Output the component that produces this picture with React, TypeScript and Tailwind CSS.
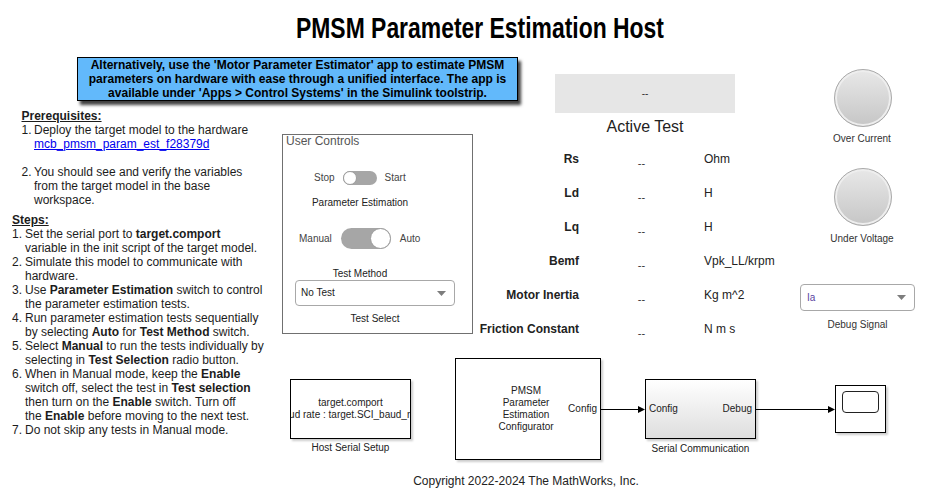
import React from "react";

function Caret() {
  return (
    <svg width="9" height="5" viewBox="0 0 9 5" className="block">
      <polygon points="0,0 9,0 4.5,5" fill="#7d7d7d" />
    </svg>
  );
}

function Arrow({ width }: { width: number }) {
  return (
    <svg width={width} height="9" viewBox={`0 0 ${width} 9`} className="block shrink-0">
      <line x1="0" y1="4.5" x2={width - 6} y2="4.5" stroke="#000" strokeWidth="1" />
      <polygon points={`${width - 7},1 ${width},4.5 ${width - 7},8`} fill="#000" />
    </svg>
  );
}

function Lamp() {
  return (
    <div className="w-[58px] h-[58px] rounded-full border border-[#a9a9a9] bg-[linear-gradient(#e8e8e8,#c6c6c6)] shadow-[inset_0_0_0_2px_#eeeeee]" />
  );
}

const params = [
  { label: "Rs", unit: "Ohm" },
  { label: "Ld", unit: "H" },
  { label: "Lq", unit: "H" },
  { label: "Bemf", unit: "Vpk_LL/krpm" },
  { label: "Motor Inertia", unit: "Kg m^2" },
  { label: "Friction Constant", unit: "N m s" },
];

export default function App() {
  return (
    <div className="relative w-[926px] h-[501px] overflow-hidden bg-white text-[#1c1c1c] font-['Liberation_Sans',Arial,sans-serif]">
      {/* Title */}
      <h1 className="absolute left-[296px] top-[14px] origin-left scale-x-[0.79] whitespace-nowrap text-[29px] leading-[29px] font-bold text-black">
        PMSM Parameter Estimation Host
      </h1>

      {/* Notice annotation */}
      <div className="absolute left-[77px] top-[57px] w-[441px] h-[44px] border border-black bg-[#62b9fb] text-center text-[12px] leading-[14px] font-bold text-black shadow-[3px_4px_3px_rgba(0,0,0,0.75)]">
        Alternatively, use the 'Motor Parameter Estimator' app to estimate PMSM
        <br />
        parameters on hardware with ease through a unified interface. The app is
        <br />
        available under 'Apps &gt; Control Systems' in the Simulink toolstrip.
      </div>

      {/* Instructions */}
      <div className="absolute left-[12px] top-[109px] w-[275px] text-[12px] leading-[14px] whitespace-nowrap">
        <div className="pl-[9.5px]">
          <p className="font-bold underline">Prerequisites:</p>
          <div className="flex">
            <span className="w-[12.5px] shrink-0">1.</span>
            <span>
              Deploy the target model to the hardware
              <br />
              <a className="text-[#0000ee] underline">mcb_pmsm_param_est_f28379d</a>
            </span>
          </div>
          <div className="h-[14px]" />
          <div className="flex">
            <span className="w-[12.5px] shrink-0">2.</span>
            <span>
              You should see and verify the variables
              <br />
              from the target model in the base
              <br />
              workspace.
            </span>
          </div>
        </div>
        <div className="mt-[6px]">
          <p className="font-bold underline">Steps:</p>
          <div className="flex">
            <span className="w-[13px] shrink-0">1.</span>
            <span>
              Set the serial port to <b>target.comport</b>
              <br />
              variable in the init script of the target model.
            </span>
          </div>
          <div className="flex">
            <span className="w-[13px] shrink-0">2.</span>
            <span>
              Simulate this model to communicate with
              <br />
              hardware.
            </span>
          </div>
          <div className="flex">
            <span className="w-[13px] shrink-0">3.</span>
            <span>
              Use <b>Parameter Estimation</b> switch to control
              <br />
              the parameter estimation tests.
            </span>
          </div>
          <div className="flex">
            <span className="w-[13px] shrink-0">4.</span>
            <span>
              Run parameter estimation tests sequentially
              <br />
              by selecting <b>Auto</b> for <b>Test Method</b> switch.
            </span>
          </div>
          <div className="flex">
            <span className="w-[13px] shrink-0">5.</span>
            <span>
              Select <b>Manual</b> to run the tests individually by
              <br />
              selecting in <b>Test Selection</b> radio button.
            </span>
          </div>
          <div className="flex">
            <span className="w-[13px] shrink-0">6.</span>
            <span>
              When in Manual mode, keep the <b>Enable</b>
              <br />
              switch off, select the test in <b>Test selection</b>
              <br />
              then turn on the <b>Enable</b> switch. Turn off
              <br />
              the <b>Enable</b> before moving to the next test.
            </span>
          </div>
          <div className="flex">
            <span className="w-[13px] shrink-0">7.</span>
            <span>Do not skip any tests in Manual mode.</span>
          </div>
        </div>
      </div>

      {/* User Controls panel */}
      <div className="absolute left-[282px] top-[134px] flex flex-col w-[191px] h-[200px] border border-[#707070] text-[10px] leading-[12px] text-[#222]">
        <div className="ml-[3px] -mt-[1px] text-[12px] leading-[14px] text-[#555]">User Controls</div>

        <div className="mt-[23px] ml-[31px] flex items-center gap-[8px] text-[#444]">
          <span>Stop</span>
          <div className="flex w-[34px] h-[14px] rounded-full bg-[#a6a6a6]">
            <div className="w-[14px] h-[14px] rounded-full border border-[#9c9c9c] bg-white" />
          </div>
          <span>Start</span>
        </div>
        <div className="mt-[12px] ml-[17px] w-[120px] text-center">Parameter Estimation</div>

        <div className="mt-[19px] ml-[16px] flex items-center gap-[9px] text-[#444]">
          <span>Manual</span>
          <div className="flex justify-end w-[50px] h-[21px] rounded-full bg-[#a6a6a6]">
            <div className="w-[21px] h-[21px] rounded-full border border-[#9c9c9c] bg-white" />
          </div>
          <span>Auto</span>
        </div>
        <div className="mt-[19px] ml-[17px] w-[120px] text-center">Test Method</div>

        <div className="ml-[12px] flex items-center justify-between w-[160px] h-[26px] rounded-[4px] border border-[#a8a8a8] bg-white pl-[5px] pr-[8px]">
          <span>No Test</span>
          <Caret />
        </div>
        <div className="mt-[7px] ml-[32px] w-[120px] text-center">Test Select</div>
      </div>

      {/* Active test display + parameter table */}
      <div className="absolute left-[555px] top-[74px] flex flex-col items-center w-[180px]">
        <div className="flex items-center justify-center w-full h-[39px] bg-[#e6e6e6] text-[10px] text-[#333]">--</div>
        <div className="mt-[4px] text-[16px] leading-[20px] text-[#222]">Active Test</div>
      </div>

      <div className="absolute left-[440px] top-[142px] grid grid-cols-[139px_125px_auto] auto-rows-[34px] items-center text-[12px] leading-[16px] text-[#222]">
        {params.map((p) => (
          <React.Fragment key={p.label}>
            <div className="text-right font-bold">{p.label}</div>
            <div className="pt-[7px] text-center text-[11px] text-[#333]">--</div>
            <div>{p.unit}</div>
          </React.Fragment>
        ))}
      </div>

      {/* Lamps and debug signal */}
      <div className="absolute left-[800px] top-[69px] flex flex-col items-center w-[115px] text-[10px] leading-[12px] text-[#333]">
        <div className="ml-[11px]">
          <Lamp />
        </div>
        <div className="mt-[6px] ml-[9px]">Over Current</div>
        <div className="mt-[23px] ml-[11px]">
          <Lamp />
        </div>
        <div className="mt-[7px] ml-[9px]">Under Voltage</div>
        <div className="mt-[39px] flex items-center justify-between w-full h-[27px] rounded-[4px] border border-[#a8a8a8] bg-white pl-[6px] pr-[8px]">
          <span className="text-[#5a3fa0]">Ia</span>
          <Caret />
        </div>
        <div className="mt-[8px]">Debug Signal</div>
      </div>

      {/* Block diagram */}
      <div className="absolute left-[290px] top-[358px] flex items-center h-[102px] text-[10px] leading-[12px] text-[#222]">
        <div className="relative">
          <div className="flex flex-col items-center justify-center w-[121px] h-[60px] overflow-hidden border border-black bg-white whitespace-nowrap shadow-[2px_2px_2px_rgba(0,0,0,0.2)]">
            <span>target.comport</span>
            <span>Baud rate : target.SCI_baud_rate</span>
          </div>
          <div className="absolute left-0 right-0 top-[63px] text-center">Host Serial Setup</div>
        </div>

        <div className="ml-[44px] flex items-center w-[146px] h-[102px] border border-black bg-white shadow-[2px_2px_2px_rgba(0,0,0,0.2)]">
          <div className="flex-1 pl-[34px] text-center">
            PMSM
            <br />
            Parameter
            <br />
            Estimation
            <br />
            Configurator
          </div>
          <div className="pr-[3px] pl-[6px]">Config</div>
        </div>

        <Arrow width={44} />

        <div className="relative">
          <div className="flex items-center justify-between w-[111px] h-[60px] border border-black bg-[linear-gradient(#ffffff,#dedede)] px-[3px] shadow-[2px_2px_2px_rgba(0,0,0,0.2)]">
            <span>Config</span>
            <span>Debug</span>
          </div>
          <div className="absolute -left-[5px] -right-[5px] top-[64px] text-center">Serial Communication</div>
        </div>

        <Arrow width={79} />

        <div className="w-[51px] h-[48px] border border-black bg-white pt-[5px] pl-[6px] shadow-[2px_2px_2px_rgba(0,0,0,0.2)]">
          <div className="w-[37px] h-[22px] rounded-[4px] border border-[#222]" />
        </div>
      </div>

      {/* Copyright */}
      <div className="absolute left-[376px] top-[474px] w-[300px] text-center text-[12px] leading-[14px] text-[#222]">
        Copyright 2022-2024 The MathWorks, Inc.
      </div>
    </div>
  );
}
